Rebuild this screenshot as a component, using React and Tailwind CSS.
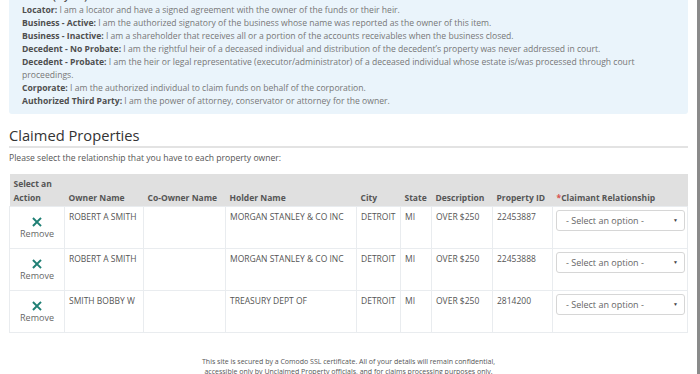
import React from "react";

const roles = [
  { label: "Owner (Myself):", text: "I am the owner of the funds listed." },
  { label: "Locator:", text: "I am a locator and have a signed agreement with the owner of the funds or their heir." },
  { label: "Business - Active:", text: "I am the authorized signatory of the business whose name was reported as the owner of this item." },
  { label: "Business - Inactive:", text: "I am a shareholder that receives all or a portion of the accounts receivables when the business closed." },
  { label: "Decedent - No Probate:", text: "I am the rightful heir of a deceased individual and distribution of the decedent’s property was never addressed in court." },
  { label: "Decedent - Probate:", text: "I am the heir or legal representative (executor/administrator) of a deceased individual whose estate is/was processed through court proceedings." },
  { label: "Corporate:", text: "I am the authorized individual to claim funds on behalf of the corporation." },
  { label: "Authorized Third Party:", text: "I am the power of attorney, conservator or attorney for the owner." },
];

const properties = [
  { id: "22453887", owner: "ROBERT A SMITH", holder: "MORGAN STANLEY & CO INC" },
  { id: "22453888", owner: "ROBERT A SMITH", holder: "MORGAN STANLEY & CO INC" },
  { id: "2814200", owner: "SMITH BOBBY W", holder: "TREASURY DEPT OF" },
];

const th = "text-left align-bottom font-bold px-[4px] pt-[3px] pb-[1px] leading-[14px]";
const td = "align-top border border-[#e9ecef] px-[4px] pt-[4px] leading-[12px]";

export default function App() {
  return (
    <div className="h-[374px] overflow-hidden bg-white flex font-['Open_Sans',sans-serif] text-[#555]">
      <div className="flex-1 min-w-0 pl-[9px] pr-[9px]">
        {/* relationship help box */}
        <div className="mt-[-19px] bg-[#eaf4fb] rounded-[3px] pl-[13px] pr-[10px] pt-[10px] pb-[6px] text-[8.6px] leading-[13px] text-[#777]">
          {roles.map((r) => (
            <p key={r.label}>
              <b className="text-[#4f4f4f]">{r.label}</b> {r.text}
            </p>
          ))}
        </div>

        <h2 className="mt-[11px] text-[14.7px] leading-[20px] text-[#333] pb-[1px] border-b-2 border-[#e3e3e3]">
          Claimed Properties
        </h2>
        <p className="mt-[4px] text-[8.6px] leading-[12px] text-[#555]">
          Please select the relationship that you have to each property owner:
        </p>

        <table className="mt-[10px] w-full table-fixed border-collapse text-[8.5px] text-[#555]">
          <thead>
            <tr className="bg-[#e0e0e0] h-[32px]">
              <th className={`${th} w-[55px]`}>Select an Action</th>
              <th className={`${th} w-[79px]`}>Owner Name</th>
              <th className={`${th} w-[82px]`}>Co-Owner Name</th>
              <th className={`${th} w-[131px]`}>Holder Name</th>
              <th className={`${th} w-[44px]`}>City</th>
              <th className={`${th} w-[31px]`}>State</th>
              <th className={`${th} w-[61px]`}>Description</th>
              <th className={`${th} w-[60px]`}>Property ID</th>
              <th className={th}>
                <span className="text-[#d9534f]">*</span>Claimant Relationship
              </th>
            </tr>
          </thead>
          <tbody>
            {properties.map((p) => (
              <tr key={p.id} className="h-[42px]">
                <td className="border border-[#e9ecef] align-top pt-[10px] text-center">
                  <div className="flex flex-col items-center">
                    <svg width="10" height="10" viewBox="0 0 12 12">
                      <path d="M2 2 L10 10 M10 2 L2 10" stroke="#1f7f74" strokeWidth="2.4" strokeLinecap="square" />
                    </svg>
                    <span className="mt-[1px] text-[9px] leading-[12px] text-[#666]">Remove</span>
                  </div>
                </td>
                <td className={td}>{p.owner}</td>
                <td className={td}></td>
                <td className={td}>{p.holder}</td>
                <td className={td}>DETROIT</td>
                <td className={td}>MI</td>
                <td className={td}>OVER $250</td>
                <td className={td}>{p.id}</td>
                <td className="border border-[#e9ecef] align-top pt-[3px] pl-[3px] pr-[2px]">
                  <div className="h-[21px] flex items-center justify-between border border-[#d6d6d6] rounded-[3px] pl-[9px] pr-[6px] text-[9px] text-[#666] bg-white">
                    <span>- Select an option -</span>
                    <span className="text-[5px] text-[#444]">▼</span>
                  </div>
                </td>
              </tr>
            ))}
          </tbody>
        </table>

        <p className="mt-[24px] text-center text-[7px] leading-[10px] text-[#555]">
          This site is secured by a Comodo SSL certificate. All of your details will remain confidential,
          <br />
          accessible only by Unclaimed Property officials, and for claims processing purposes only.
        </p>
      </div>
      <div className="w-[3px] shrink-0 bg-[#8a8a8a]" />
    </div>
  );
}
